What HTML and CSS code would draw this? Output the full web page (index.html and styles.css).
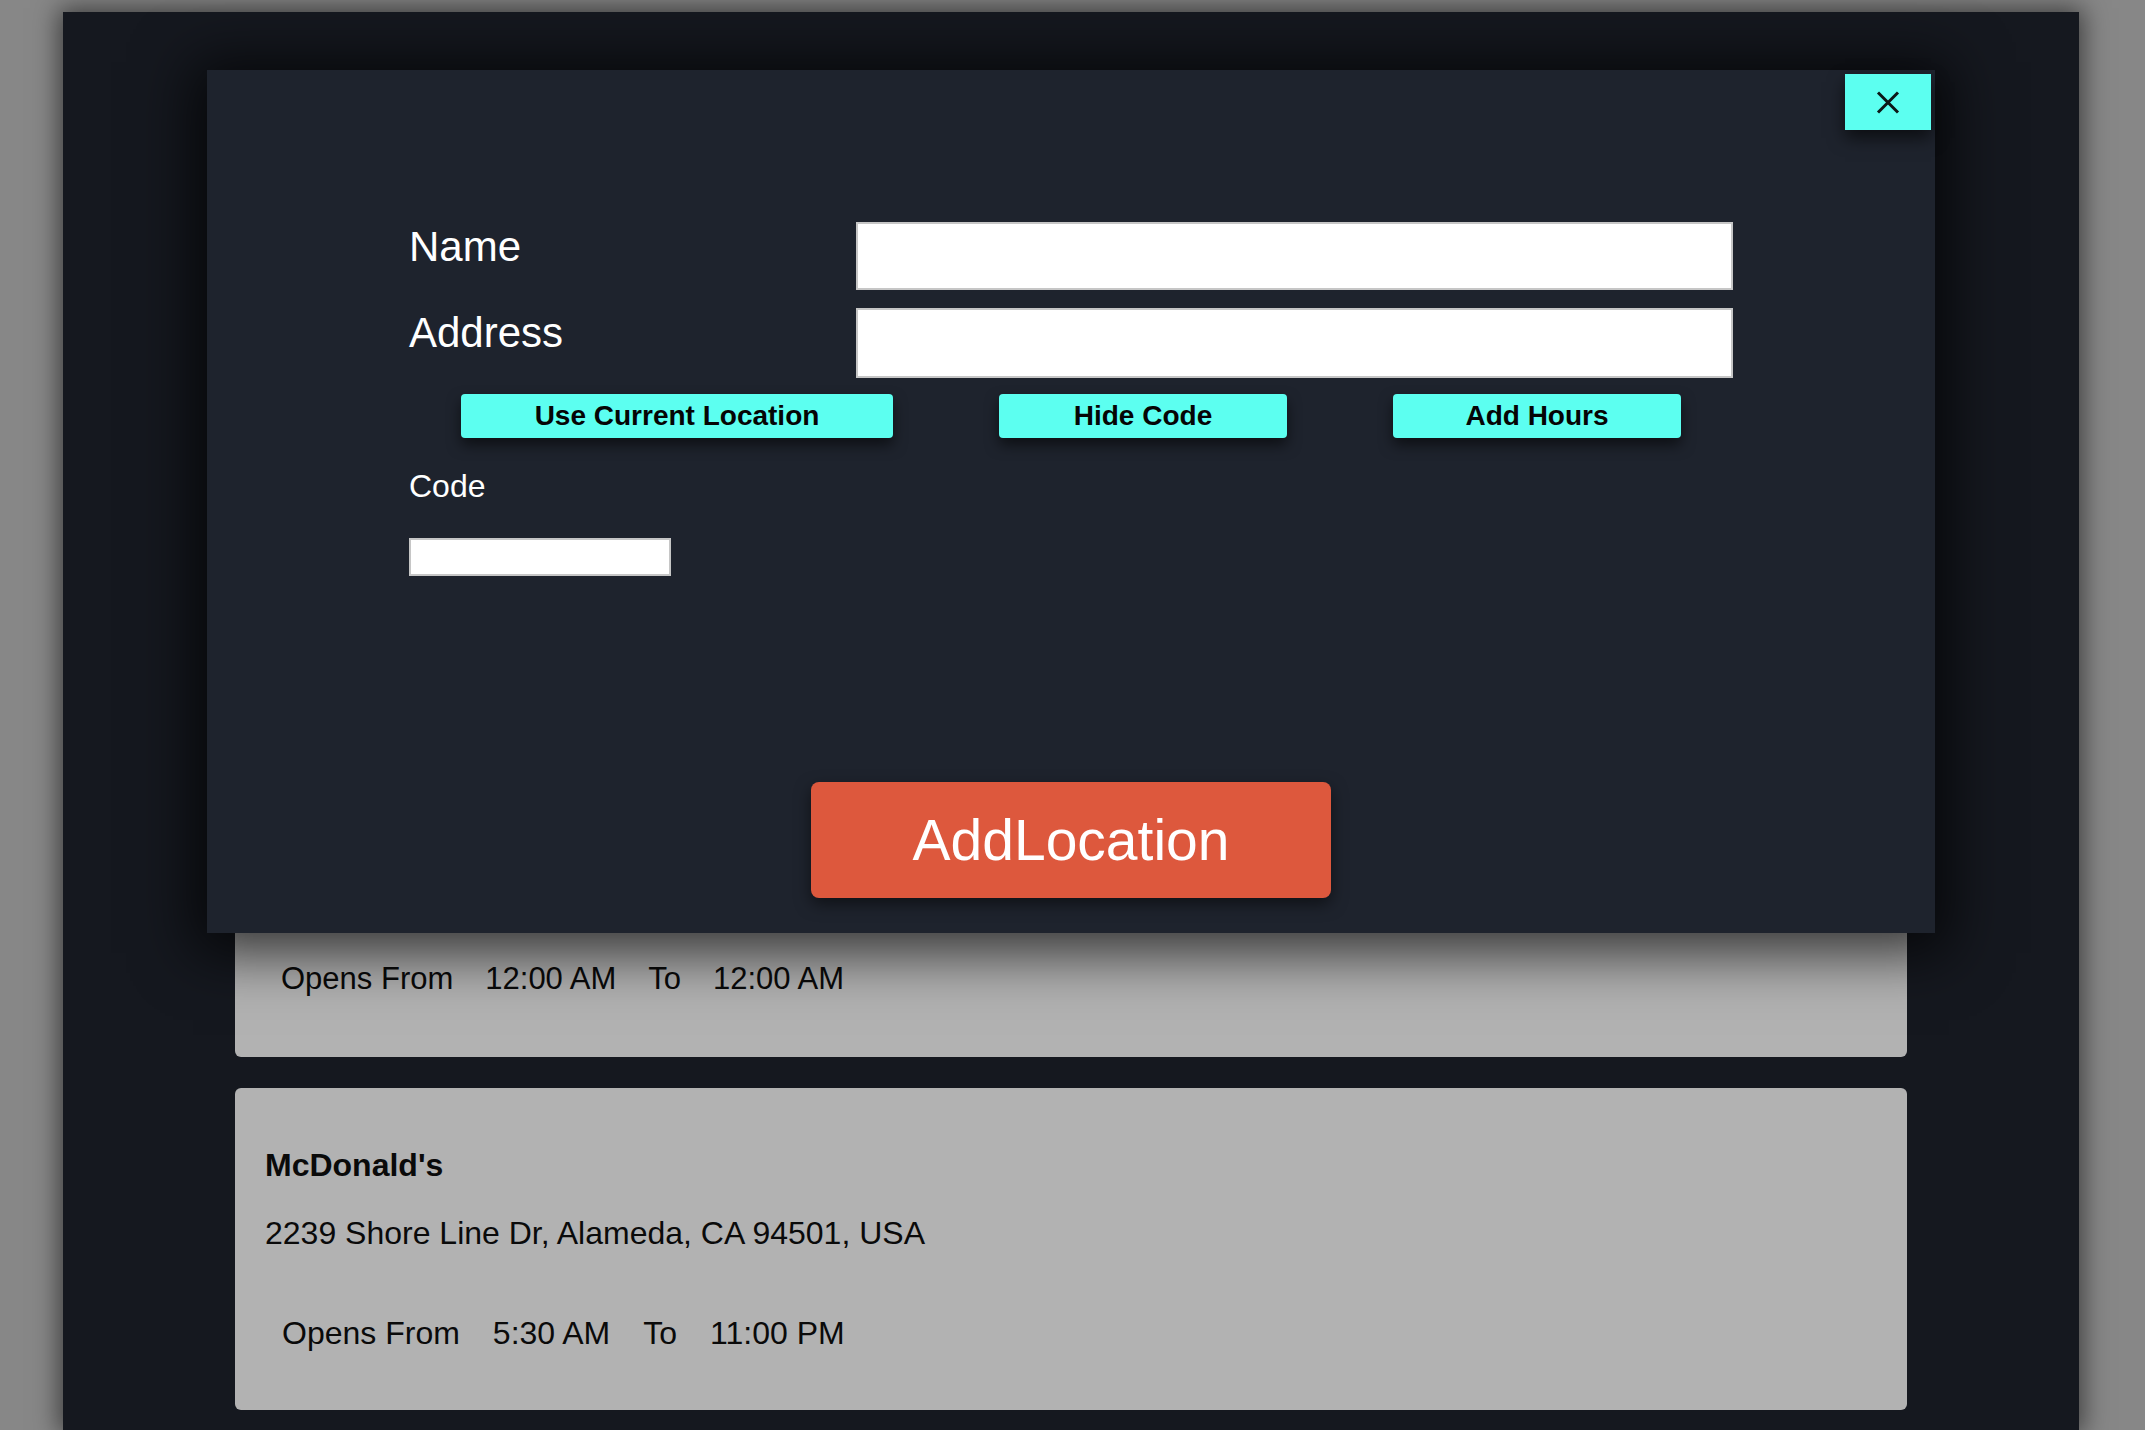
FILE: index.html
```html
<!DOCTYPE html>
<html lang="en">
<head>
<meta charset="utf-8">
<title>Locations</title>
<link rel="stylesheet" href="styles.css">
</head>
<body>
  <div class="app">
    <div class="list">
      <div class="card card--partial">
        <div class="hours">
          <span>Opens From</span>
          <span>12:00 AM</span>
          <span>To</span>
          <span>12:00 AM</span>
        </div>
      </div>
      <div class="card">
        <div class="card-name">McDonald's</div>
        <div class="card-address">2239 Shore Line Dr, Alameda, CA 94501, USA</div>
        <div class="hours hours--wide">
          <span>Opens From</span>
          <span>5:30 AM</span>
          <span>To</span>
          <span>11:00 PM</span>
        </div>
      </div>
    </div>
  </div>

  <div class="modal">
    <button class="close-btn" aria-label="Close">
      <svg width="24" height="23" viewBox="0 0 24 23"><path d="M2 1.5 L22 21.5 M22 1.5 L2 21.5" stroke="#0c1716" stroke-width="3" fill="none"/></svg>
    </button>
    <div class="form">
      <div class="field-grid">
        <label class="big-label">Name</label>
        <input class="text-input name-input" type="text">
        <label class="big-label">Address</label>
        <input class="text-input address-input" type="text">
      </div>
      <div class="action-row">
        <button class="cyan-btn wide">Use Current Location</button>
        <button class="cyan-btn">Hide Code</button>
        <button class="cyan-btn">Add Hours</button>
      </div>
      <label class="code-label">Code</label>
      <input class="text-input code-input" type="text">
    </div>
    <button class="add-btn">AddLocation</button>
  </div>
</body>
</html>
```

FILE: styles.css
```css
* { box-sizing: border-box; }

html, body {
  margin: 0;
  padding: 0;
}

body {
  background: #878787;
  width: 2145px;
  height: 1430px;
  overflow: hidden;
  font-family: "Liberation Sans", Arial, Helvetica, sans-serif;
}

.app {
  margin: 12px 0 0 63px;
  width: 2016px;
  height: 1418px;
  background: #15181f;
  box-shadow: 0 0 24px 4px rgba(0, 0, 0, 0.55);
}

.list {
  padding: 723px 172px 0;
  display: flex;
  flex-direction: column;
  gap: 31px;
}

.card {
  background: #b2b2b2;
  border-radius: 6px;
  padding: 59px 30px 59px;
  color: #0a0a0a;
  height: 322px;
}

.card--partial {
  padding-top: 225px;
}

.card-name {
  font-size: 32px;
  font-weight: bold;
  line-height: 37px;
}

.card-address {
  font-size: 32px;
  line-height: 37px;
  margin-top: 31px;
}

.hours {
  display: flex;
  gap: 32px;
  font-size: 31px;
  line-height: 37px;
  padding-left: 17px;
  margin-top: 63px;
}

.hours--wide {
  font-size: 32px;
  gap: 33px;
}

.card--partial .hours {
  margin-top: 0;
  padding-left: 16px;
}

/* Modal overlay */
.modal {
  position: absolute;
  left: 207px;
  top: 70px;
  width: 1728px;
  height: 863px;
  background: #1e232d;
  box-shadow: 0 6px 55px 14px rgba(0, 0, 0, 0.72);
  display: flex;
  flex-direction: column;
  align-items: center;
  padding: 152px 0 35px;
}

.close-btn {
  position: absolute;
  top: 4px;
  right: 4px;
  width: 86px;
  height: 56px;
  border: none;
  padding: 0;
  background: #5cfff0;
  display: flex;
  align-items: center;
  justify-content: center;
  box-shadow: 0 8px 16px rgba(0, 0, 0, 0.6);
}

.close-btn svg { display: block; }

.form {
  width: 1324px;
  display: flex;
  flex-direction: column;
}

.field-grid {
  display: grid;
  grid-template-columns: 447px 877px;
  row-gap: 18px;
  align-items: start;
}

.big-label {
  color: #ffffff;
  font-size: 42px;
  line-height: 48px;
  padding-top: 1px;
}

.text-input {
  display: block;
  background: #ffffff;
  border: 2px solid #c6c6c6;
  margin: 0;
  padding: 0;
  outline: none;
}

.name-input { width: 877px; height: 68px; }
.address-input { width: 877px; height: 70px; }

.action-row {
  display: flex;
  justify-content: center;
  gap: 106px;
  margin-top: 16px;
}

.cyan-btn {
  width: 288px;
  height: 44px;
  border: none;
  border-radius: 4px;
  background: #5cfff0;
  color: #050505;
  font-family: "Liberation Sans", Arial, Helvetica, sans-serif;
  font-size: 28px;
  font-weight: bold;
  padding: 0;
  box-shadow: 0 7px 14px rgba(0, 0, 0, 0.55);
}

.cyan-btn.wide { width: 432px; }

.code-label {
  color: #ffffff;
  font-size: 32px;
  line-height: 37px;
  margin-top: 30px;
}

.code-input {
  width: 262px;
  height: 38px;
  margin-top: 33px;
}

.add-btn {
  margin-top: auto;
  width: 520px;
  height: 116px;
  border: none;
  border-radius: 8px;
  background: #dd583d;
  color: #ffffff;
  font-family: "Liberation Sans", Arial, Helvetica, sans-serif;
  font-size: 57px;
  padding: 0;
  box-shadow: 0 6px 16px rgba(0, 0, 0, 0.5);
}
```
